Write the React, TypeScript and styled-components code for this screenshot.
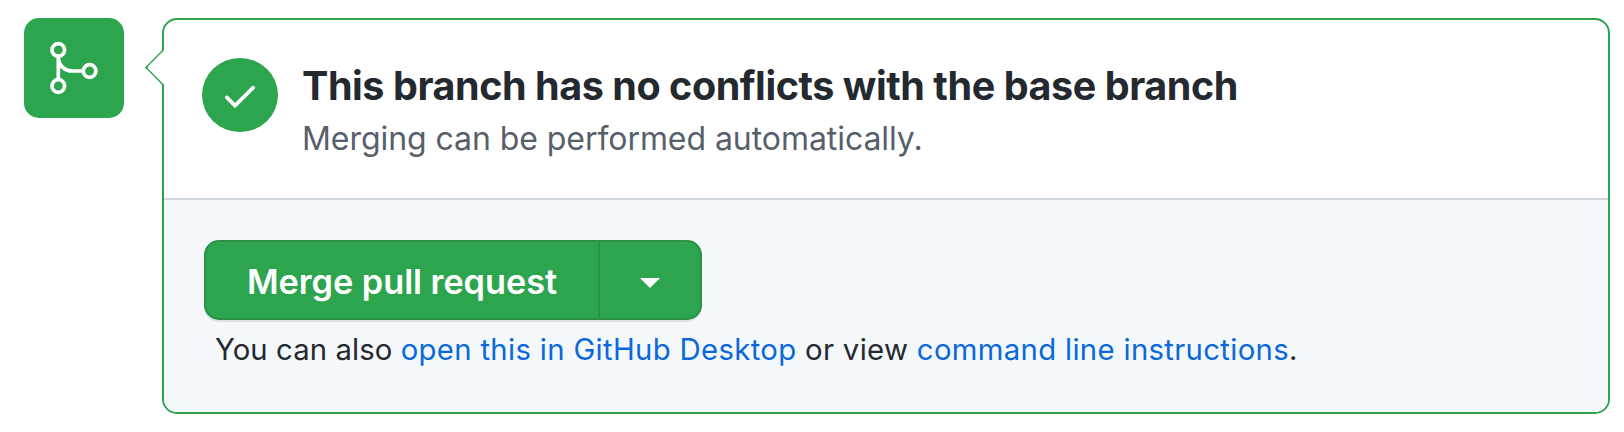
import React from "react";
import styled, { createGlobalStyle } from "styled-components";

const green = "#2da44e";
const greenEdge = "#2a9147";
const fontStack = `Inter, "Liberation Sans", sans-serif`;

const GlobalStyle = createGlobalStyle`
  *, *::before, *::after { box-sizing: border-box; }
  body {
    margin: 0;
    background: #ffffff;
    color: #24292f;
    font-family: ${fontStack};
  }
`;

const MergeSection = styled.section`
  display: flex;
  align-items: flex-start;
  gap: 38px;
  width: 1624px;
  height: 432px;
  padding: 18px 14px 18px 24px;
`;

const StatusBadge = styled.div`
  flex: none;
  width: 100px;
  height: 100px;
  border-radius: 15px;
  background: ${green};

  svg {
    display: block;
  }
`;

const Panel = styled.div`
  position: relative;
  flex: 1;
  height: 396px;
  border: 2px solid ${green};
  border-radius: 15px;
`;

const Pointer = styled.svg`
  position: absolute;
  top: 28px;
  left: -20px;
`;

const Summary = styled.div`
  display: flex;
  height: 180px;
  padding: 38px 38px 0;
  border-bottom: 2px solid #d0d7de;
`;

const CheckCircle = styled.div`
  flex: none;
  width: 76px;
  height: 74px;
  margin-right: 24px;
  border-radius: 50%;
  background: ${green};

  svg {
    display: block;
  }
`;

const Title = styled.h3`
  margin: 3px 0 0;
  font-size: 39.5px;
  line-height: 50px;
  font-weight: 660;
  letter-spacing: -0.44px;
  white-space: nowrap;
`;

const Subtitle = styled.p`
  margin: 8px 0 0;
  color: #57606a;
  font-size: 32px;
  line-height: 40px;
  font-weight: 420;
  letter-spacing: -0.06px;
  white-space: nowrap;
`;

const Actions = styled.div`
  height: 212px;
  padding: 40px 40px 0;
  border-radius: 0 0 13px 13px;
  background: #f4f8fb;
`;

const ButtonGroup = styled.div`
  display: flex;
  width: 498px;
  height: 80px;
  border: 2px solid ${greenEdge};
  border-radius: 15px;
  background: ${green};
  box-shadow: 0 2px 0 rgba(27, 31, 36, 0.1), inset 0 2px 0 rgba(255, 255, 255, 0.03);
`;

const GroupButton = styled.button<{ $width: number; $divided?: boolean }>`
  display: flex;
  align-items: center;
  justify-content: center;
  width: ${(p) => p.$width}px;
  padding: 3px 0 0;
  border: 0;
  border-left: ${(p) => (p.$divided ? `2px solid ${greenEdge}` : "0")};
  background: none;
  color: #ffffff;
  font: 600 34.3px/50px ${fontStack};
  letter-spacing: -0.05px;
  white-space: nowrap;
`;

const Caret = styled.span`
  margin-top: 3px;
  border: 10px solid transparent;
  border-top-color: #ffffff;
  border-bottom: 0;
`;

const Hint = styled.p`
  margin: 10px 0 0 11px;
  font-size: 29.3px;
  line-height: 40px;
  font-weight: 420;
  letter-spacing: 0.33px;
  white-space: nowrap;
`;

const HintLead = styled.span`
  letter-spacing: 0.08px;
`;

const Link = styled.a`
  color: #0969da;
  text-decoration: none;
`;

const MergeIcon = () => (
  <svg width="100" height="100" viewBox="0 0 100 100" fill="none" stroke="#ffffff" strokeWidth="3.7">
    <circle cx="34.3" cy="31.9" r="6.3" />
    <circle cx="34.3" cy="68" r="6.3" />
    <circle cx="65.6" cy="53" r="6.3" />
    <path d="M34.3 38.5V61.5M34.3 38.5C34.3 46.8 40 53 48.3 53H59" />
  </svg>
);

const CheckIcon = () => (
  <svg width="76" height="74" viewBox="0 0 76 74" fill="none" stroke="#ffffff" strokeWidth="3.7" strokeLinecap="round">
    <path d="M24.8 39.4L33 47.6L51.2 29.6" />
  </svg>
);

export default function App() {
  return (
    <>
      <GlobalStyle />
      <MergeSection>
        <StatusBadge>
          <MergeIcon />
        </StatusBadge>
        <Panel>
          <Pointer width="20" height="40" viewBox="0 0 20 40">
            <path d="M20 2L2 19.4L20 37V2Z" fill="#ffffff" />
            <path d="M19.3 2.1L2 19.4L19.3 36.9" fill="none" stroke={green} strokeWidth="1.4" />
            <path d="M1.2 19.4L3.8 17V21.8Z" fill={green} />
          </Pointer>
          <Summary>
            <CheckCircle>
              <CheckIcon />
            </CheckCircle>
            <div>
              <Title>This branch has no conflicts with the base branch</Title>
              <Subtitle>Merging can be performed automatically.</Subtitle>
            </div>
          </Summary>
          <Actions>
            <ButtonGroup>
              <GroupButton $width={392}>Merge pull request</GroupButton>
              <GroupButton $width={102} $divided aria-label="Select merge method">
                <Caret />
              </GroupButton>
            </ButtonGroup>
            <Hint>
              <HintLead>You can also </HintLead>
              <Link>open this in GitHub Desktop</Link> or view <Link>command line instructions</Link>.
            </Hint>
          </Actions>
        </Panel>
      </MergeSection>
    </>
  );
}
